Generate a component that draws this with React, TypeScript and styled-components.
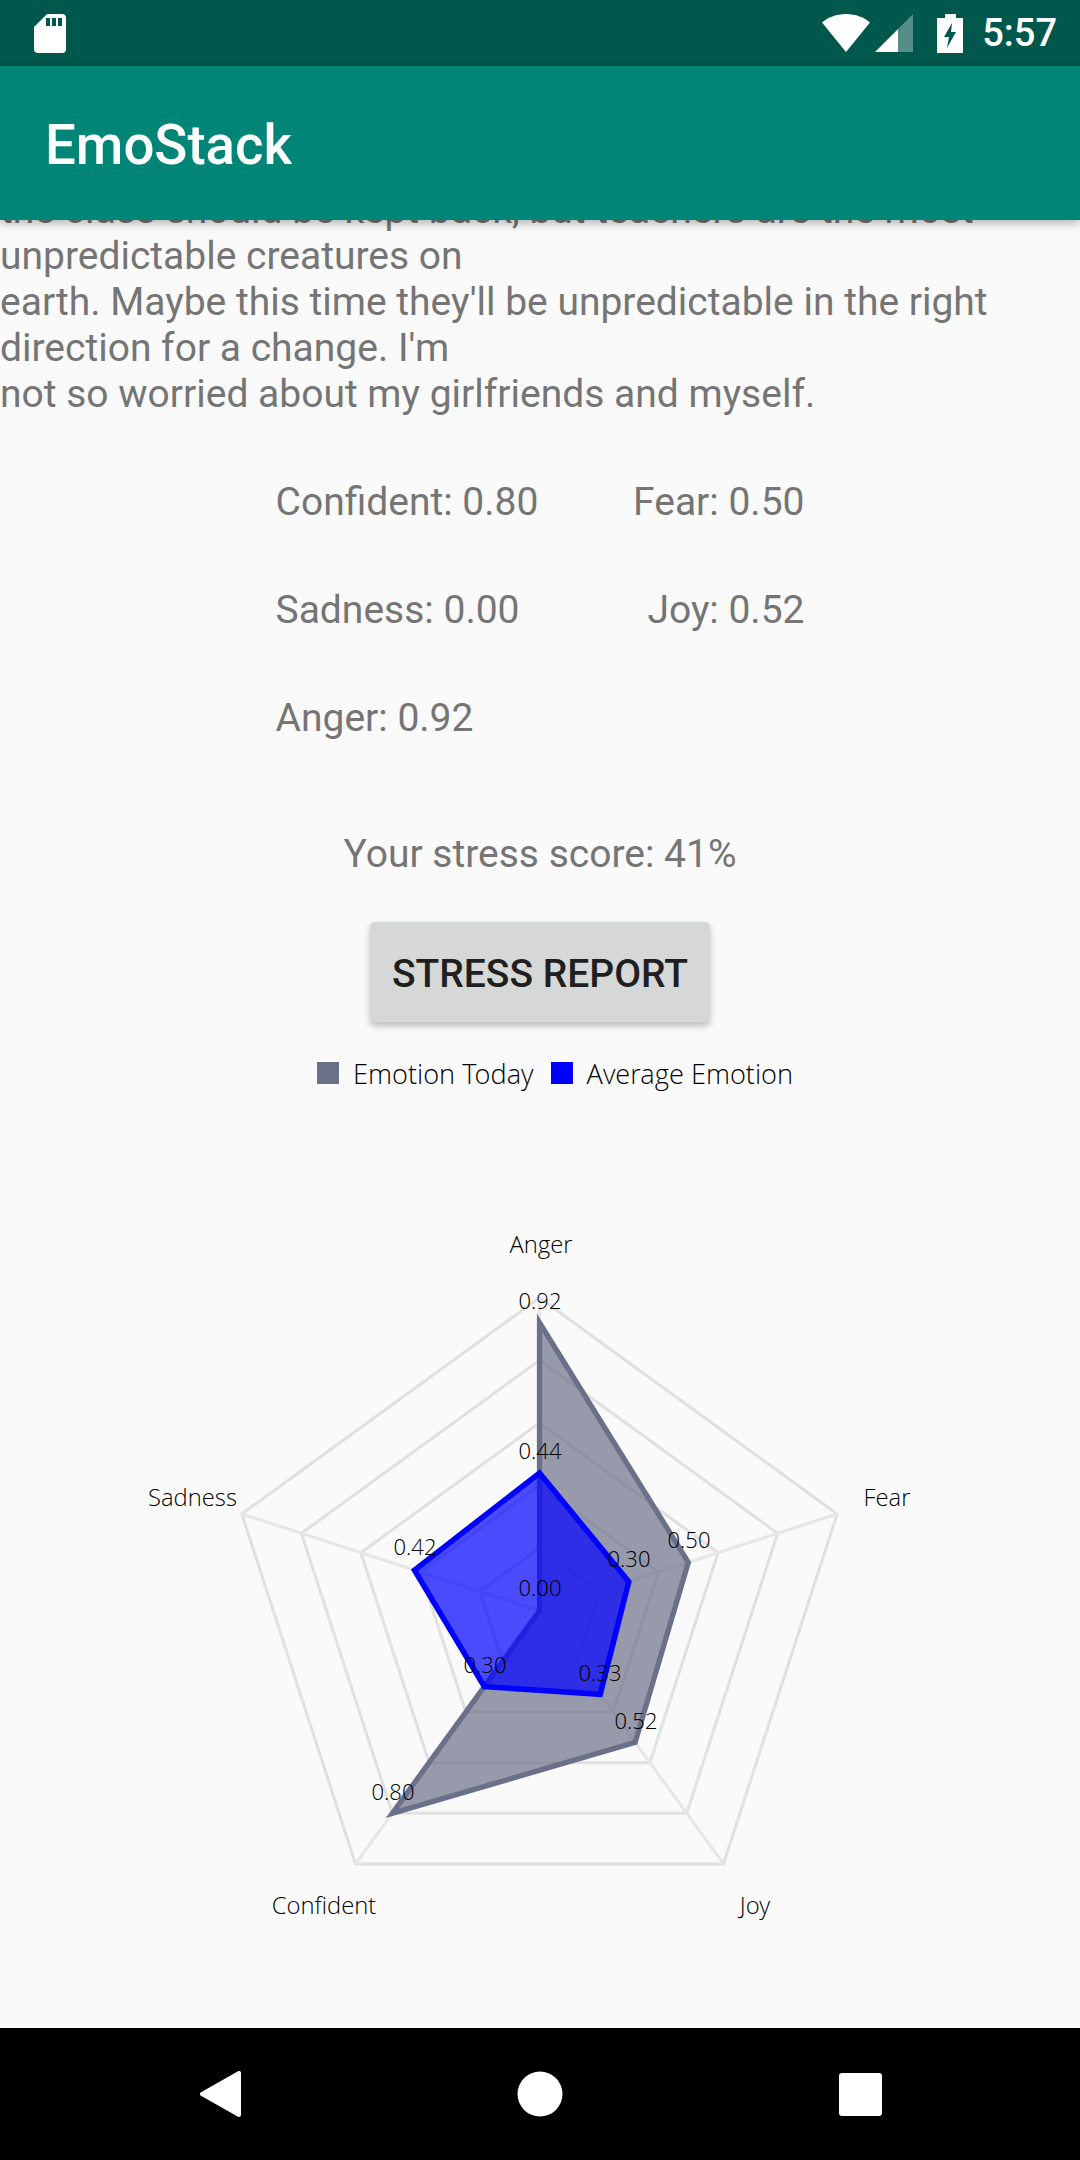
import React from "react";
import styled, { createGlobalStyle } from "styled-components";

const Global = createGlobalStyle`
  html, body { margin: 0; padding: 0; background: #fafafa; }
`;

const Screen = styled.div`
  width: 1080px;
  height: 2160px;
  display: flex;
  flex-direction: column;
  overflow: hidden;
  background: #fafafa;
  font-family: Roboto, "Liberation Sans", sans-serif;
`;

const StatusBar = styled.div`
  height: 66px;
  flex: none;
  background: #00574b;
  display: flex;
  align-items: center;
  justify-content: space-between;
  padding: 0 23px 0 34px;
  position: relative;
  z-index: 2;
`;

const StatusRight = styled.div`
  display: flex;
  align-items: center;
`;

const Clock = styled.span`
  color: #fff;
  font-size: 38px;
  font-weight: 500;
  line-height: 66px;
  margin-left: 19px;
`;

const StatusIcon = styled.svg<{ $gap?: number }>`
  display: block;
  margin-left: ${(p) => p.$gap ?? 0}px;
`;

const Toolbar = styled.header`
  height: 154px;
  flex: none;
  background: #008577;
  display: flex;
  align-items: center;
  padding-left: 45px;
  position: relative;
  z-index: 2;
  box-shadow: 0 3px 10px rgba(0, 0, 0, 0.3);
`;

const Title = styled.h1`
  margin: 3px 0 0;
  color: #fff;
  font-size: 54.6px;
  font-weight: 500;
  line-height: 62px;
`;

const Content = styled.main`
  flex: 1;
  overflow: hidden;
  display: flex;
  flex-direction: column;
  align-items: stretch;
`;

const Paragraph = styled.p`
  margin: -33px 0 0;
  color: #757575;
  font-size: 39px;
  line-height: 46px;
`;

const Stats = styled.div`
  width: 529px;
  margin: 31px auto 0;
  display: grid;
  grid-template-columns: 1fr auto;
  grid-auto-rows: 108px;
  align-items: center;
  color: #757575;
  font-size: 39px;
`;

const StatRight = styled.span`
  text-align: right;
`;

const Score = styled.div`
  margin-top: 59px;
  text-align: center;
  color: #757575;
  font-size: 39px;
  line-height: 46px;
`;

const ReportButton = styled.button`
  align-self: center;
  margin-top: 45px;
  width: 340px;
  height: 100px;
  border: 0;
  border-radius: 5px;
  background: #d6d7d7;
  color: #1f1f1f;
  font-family: Roboto, sans-serif;
  font-size: 39px;
  font-weight: 500;
  box-shadow: 0 4px 7px rgba(0, 0, 0, 0.25);
  padding: 4px 0 0;
`;

const Legend = styled.div`
  margin: 36px 0 0 317px;
  height: 30px;
  display: flex;
  align-items: center;
  font-family: "Open Sans Light", "Open Sans", sans-serif;
  font-weight: 300;
  font-size: 27.2px;
  color: #000;
`;

const Swatch = styled.span<{ $color: string }>`
  width: 22px;
  height: 22px;
  flex: none;
  background: ${(p) => p.$color};
`;

const LegendLabel = styled.span`
  margin: 0 17px 0 14px;
  white-space: nowrap;
`;

const Chart = styled.svg`
  display: block;
  flex: none;
  margin-top: 127px;
  font-family: "Open Sans Light", "Open Sans", sans-serif;
  font-weight: 300;
`;

const NavBar = styled.nav`
  height: 132px;
  flex: none;
  background: #000;
  display: flex;
  align-items: center;
  padding: 0 198px 0 200px;
  justify-content: space-between;
`;

const CX = 539.5;
const CY = 1610.7;
const R = 313;
const angle = (i: number) => (i * 2 * Math.PI) / 5;
const pt = (i: number, v: number): [number, number] => [
  CX + R * v * Math.sin(angle(i)),
  CY - R * v * Math.cos(angle(i)),
];
const poly = (vals: number[]) => vals.map((v, i) => pt(i, v).join(",")).join(" ");

const axisLabels = [
  { t: "Anger", x: 541, y: 1253 },
  { t: "Fear", x: 887, y: 1506 },
  { t: "Joy", x: 755, y: 1914 },
  { t: "Confident", x: 324, y: 1914 },
  { t: "Sadness", x: 192.5, y: 1506 },
];
const valueLabels = [
  { t: "0.92", x: 540, y: 1308.5 },
  { t: "0.50", x: 689, y: 1548 },
  { t: "0.52", x: 636, y: 1728.5 },
  { t: "0.80", x: 393, y: 1800 },
  { t: "0.00", x: 540, y: 1596 },
  { t: "0.44", x: 540, y: 1458.5 },
  { t: "0.30", x: 629, y: 1567 },
  { t: "0.33", x: 600, y: 1681 },
  { t: "0.30", x: 485, y: 1673 },
  { t: "0.42", x: 415, y: 1555 },
];

const RadarChart = () => (
  <Chart width={1080} height={740} viewBox="0 1215 1080 740">
    {[0.2, 0.4, 0.6, 0.8, 1].map((s) => (
      <polygon key={s} points={poly([s, s, s, s, s])} fill="none" stroke="#e0e0e0" strokeWidth={3} />
    ))}
    {[0, 1, 2, 3, 4].map((i) => {
      const [x, y] = pt(i, 1);
      return <line key={i} x1={CX} y1={CY} x2={x} y2={y} stroke="#e6e6e6" strokeWidth={3} />;
    })}
    <polygon
      points={poly([0.92, 0.5, 0.52, 0.8, 0])}
      fill="rgba(107,112,137,0.7)"
      stroke="#6b7089"
      strokeWidth={5.25}
      strokeLinejoin="miter"
    />
    <polygon
      points={poly([0.44, 0.3, 0.33, 0.3, 0.42])}
      fill="rgba(0,0,255,0.7)"
      stroke="#0000ff"
      strokeWidth={5.5}
    />
    {axisLabels.map((l) => (
      <text key={l.t} x={l.x} y={l.y} fontSize={23.8} fill="#000" textAnchor="middle">
        {l.t}
      </text>
    ))}
    {valueLabels.map((l) => (
      <text key={l.t + l.x} x={l.x} y={l.y} fontSize={22} fill="#000" textAnchor="middle">
        {l.t}
      </text>
    ))}
  </Chart>
);

export default function App() {
  return (
    <Screen>
      <Global />
      <StatusBar>
        <StatusIcon width={32} height={39} viewBox="0 0 32 39">
          <path
            fill="#fff"
            fillRule="evenodd"
            d="M13 0H28a4 4 0 0 1 4 4V35a4 4 0 0 1-4 4H4a4 4 0 0 1-4-4V13ZM12 4V12H16V4ZM18 4V12H22V4ZM24 4V12H28V4Z"
          />
        </StatusIcon>
        <StatusRight>
          <StatusIcon width={48} height={38} viewBox="0 0 48 38">
            <path fill="#fff" d="M24 38L0 8.5C6 3.5 14 0 24 0S42 3.5 48 8.5Z" />
          </StatusIcon>
          <StatusIcon width={38} height={38} viewBox="0 0 38 38" $gap={5}>
            <path fill="#fff" fillOpacity={0.33} d="M38 0V38H23V15Z" />
            <path fill="#fff" d="M0 38L23 15V38Z" />
          </StatusIcon>
          <StatusIcon width={26} height={39} viewBox="0 0 26 39" $gap={24}>
            <path
              fill="#fff"
              fillRule="evenodd"
              d="M8 0H19V4H26V39H0V4H8ZM15 9L7 23H12L10 34L19 18H14Z"
            />
          </StatusIcon>
          <Clock>5:57</Clock>
        </StatusRight>
      </StatusBar>
      <Toolbar>
        <Title>EmoStack</Title>
      </Toolbar>
      <Content>
        <Paragraph>
          the class should be kept back, but teachers are the most
          <br />
          unpredictable creatures on
          <br />
          earth. Maybe this time they'll be unpredictable in the right
          <br />
          direction for a change. I'm
          <br />
          not so worried about my girlfriends and myself.
        </Paragraph>
        <Stats>
          <span>Confident: 0.80</span>
          <StatRight>Fear: 0.50</StatRight>
          <span>Sadness: 0.00</span>
          <StatRight>Joy: 0.52</StatRight>
          <span>Anger: 0.92</span>
        </Stats>
        <Score>Your stress score: 41%</Score>
        <ReportButton>STRESS REPORT</ReportButton>
        <Legend>
          <Swatch $color="#6b7089" />
          <LegendLabel>Emotion Today</LegendLabel>
          <Swatch $color="#0000ff" />
          <LegendLabel>Average Emotion</LegendLabel>
        </Legend>
        <RadarChart />
      </Content>
      <NavBar>
        <svg width={41} height={46} viewBox="1 0 41 46">
          <path fill="#fff" stroke="#fff" strokeWidth={4} strokeLinejoin="round" d="M40 2V44L3 23Z" />
        </svg>
        <svg width={46} height={46} viewBox="0 0 46 46">
          <circle cx={23} cy={23} r={22.5} fill="#fff" />
        </svg>
        <svg width={43} height={43} viewBox="0 0 43 43">
          <rect width={43} height={43} rx={3} fill="#fff" />
        </svg>
      </NavBar>
    </Screen>
  );
}
